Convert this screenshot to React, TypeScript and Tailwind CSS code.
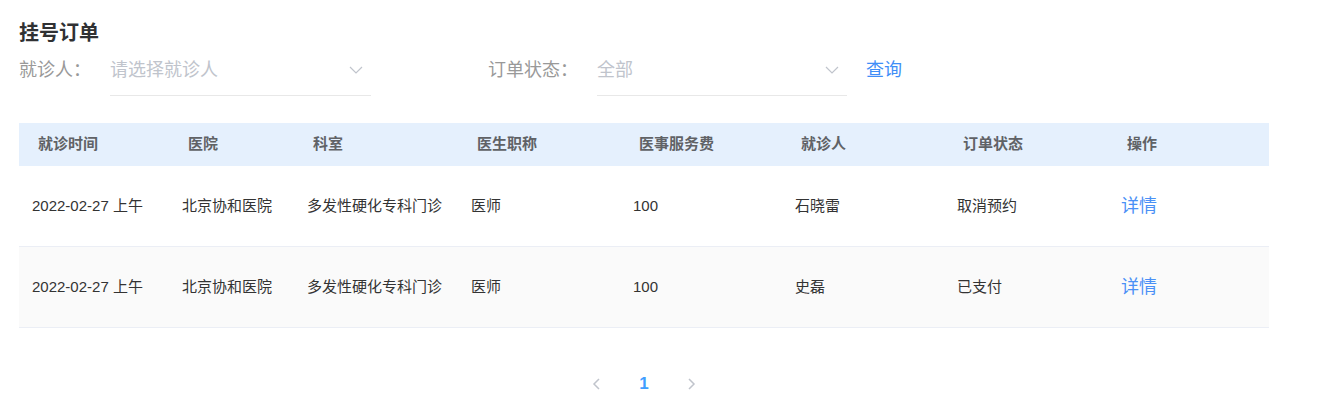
import React from 'react';

const columns = [
    { label: '就诊时间', width: 'w-[150px]' },
    { label: '医院', width: 'w-[125px]' },
    { label: '科室', width: 'w-[164px]' },
    { label: '医生职称', width: 'w-[162px]' },
    { label: '医事服务费', width: 'w-[162px]' },
    { label: '就诊人', width: 'w-[162px]' },
    { label: '订单状态', width: 'w-[164px]' },
    { label: '操作', width: 'w-[161px]' },
];

const orders = [
    ['2022-02-27 上午', '北京协和医院', '多发性硬化专科门诊', '医师', '100', '石晓雷', '取消预约'],
    ['2022-02-27 上午', '北京协和医院', '多发性硬化专科门诊', '医师', '100', '史磊', '已支付'],
];

function ChevronDown() {
    return (
        <svg width="14" height="8" viewBox="0 0 14 8" fill="none">
            <polyline points="1,1 7,7 13,1" stroke="#c0c4cc" strokeWidth="1.2" />
        </svg>
    );
}

function Select({ placeholder, width }: { placeholder: string; width: string }) {
    return (
        <div className={`${width} h-[49px] flex items-center justify-between border-b border-[#e8e8e8] pr-[8px] pb-[2px]`}>
            <span className="text-[18px] text-[#c0c4cc]">{placeholder}</span>
            <ChevronDown />
        </div>
    );
}

export default function App() {
    return (
        <div
            className="min-h-screen bg-white"
            style={{ fontFamily: '"Liberation Sans", "Noto Sans CJK SC", sans-serif' }}
        >
            <div className="w-[1250px] ml-[19px] pt-[19px]">
                {/* 标题 */}
                <h1 className="text-[20px] leading-[28px] font-bold text-[#303133]">挂号订单</h1>

                {/* 查询条件 */}
                <div className="flex items-center">
                    <span className="text-[18px] text-[#999] mr-[19px] pb-[2px]">就诊人：</span>
                    <Select placeholder="请选择就诊人" width="w-[261px]" />
                    <span className="text-[18px] text-[#999] ml-[117px] mr-[19px] pb-[2px]">订单状态：</span>
                    <Select placeholder="全部" width="w-[250px]" />
                    <span className="text-[18px] text-[#3f8ef7] ml-[19px] pb-[2px] cursor-pointer">查询</span>
                </div>

                {/* 表格 */}
                <div className="mt-[27px]">
                    <div className="flex h-[43px] items-center bg-[#e5f0fd]">
                        {columns.map((col) => (
                            <div key={col.label} className={`${col.width} pl-[19px] text-[15px] font-bold text-[#606266]`}>
                                {col.label}
                            </div>
                        ))}
                    </div>
                    {orders.map((row, i) => (
                        <div
                            key={i}
                            className={`flex h-[81px] items-center border-b border-[#ebeef5] ${i % 2 === 1 ? 'bg-[#fafafa]' : 'bg-white'}`}
                        >
                            {row.map((cell, j) => (
                                <div key={j} className={`${columns[j].width} pl-[13px] text-[15px] text-[#333]`}>
                                    {cell}
                                </div>
                            ))}
                            <div className={`${columns[7].width} pl-[13px] text-[18px] text-[#4a90f6] cursor-pointer`}>详情</div>
                        </div>
                    ))}
                </div>

                {/* 分页 */}
                <div className="mt-[40px] flex h-[32px] items-center justify-center">
                    <div className="w-[48px] flex justify-center">
                        <svg width="8" height="12" viewBox="0 0 8 12" fill="none">
                            <polyline points="7,1 2,6 7,11" stroke="#c0c4cc" strokeWidth="1.5" />
                        </svg>
                    </div>
                    <div className="w-[48px] text-center text-[17px] font-bold text-[#409eff]">1</div>
                    <div className="w-[48px] flex justify-center">
                        <svg width="8" height="12" viewBox="0 0 8 12" fill="none">
                            <polyline points="1,1 6,6 1,11" stroke="#c0c4cc" strokeWidth="1.5" />
                        </svg>
                    </div>
                </div>
            </div>
        </div>
    );
}
